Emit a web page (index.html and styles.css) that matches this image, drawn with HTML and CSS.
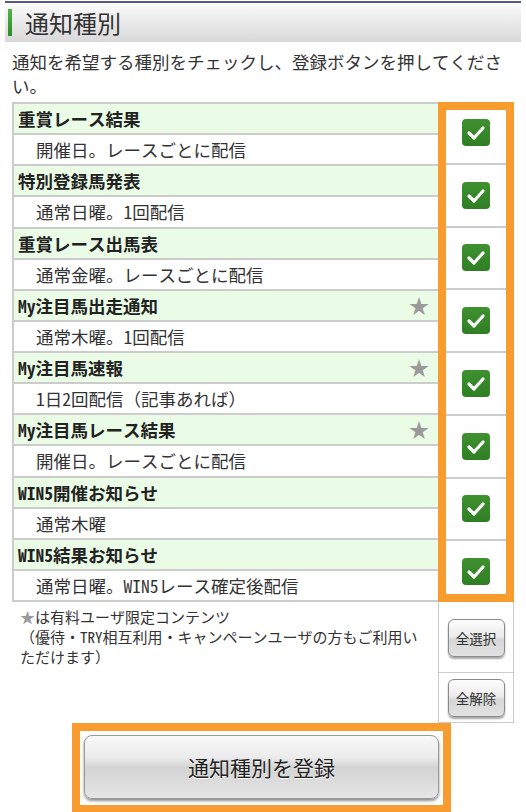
FILE: index.html
```html
<!DOCTYPE html>
<html lang="ja">
<head>
<meta charset="utf-8">
<title>通知種別</title>
<link rel="stylesheet" href="styles.css">
</head>
<body>
<div class="page">
  <div class="header"><span class="bar"></span><h1 class="title">通知種別</h1></div>
  <p class="intro">通知を希望する種別をチェックし、登録ボタンを押してください。</p>
  <div class="main">
    <div class="list">
      <div class="row head">重賞レース結果</div>
      <div class="row desc">開催日。レースごとに配信</div>
      <div class="row head">特別登録馬発表</div>
      <div class="row desc">通常日曜。1回配信</div>
      <div class="row head">重賞レース出馬表</div>
      <div class="row desc">通常金曜。レースごとに配信</div>
      <div class="row head"><span>My注目馬出走通知</span><span class="star">★</span></div>
      <div class="row desc">通常木曜。1回配信</div>
      <div class="row head"><span>My注目馬速報</span><span class="star">★</span></div>
      <div class="row desc">1日2回配信（記事あれば）</div>
      <div class="row head"><span>My注目馬レース結果</span><span class="star">★</span></div>
      <div class="row desc">開催日。レースごとに配信</div>
      <div class="row head">WIN5開催お知らせ</div>
      <div class="row desc">通常木曜</div>
      <div class="row head">WIN5結果お知らせ</div>
      <div class="row desc">通常日曜。WIN5レース確定後配信</div>
    </div>
    <div class="checks">
      <div class="cell"><span class="cb"><svg viewBox="0 0 28 27" width="28" height="27"><polyline points="7,14 12,19 21,9" /></svg></span></div>
      <div class="cell"><span class="cb"><svg viewBox="0 0 28 27" width="28" height="27"><polyline points="7,14 12,19 21,9" /></svg></span></div>
      <div class="cell"><span class="cb"><svg viewBox="0 0 28 27" width="28" height="27"><polyline points="7,14 12,19 21,9" /></svg></span></div>
      <div class="cell"><span class="cb"><svg viewBox="0 0 28 27" width="28" height="27"><polyline points="7,14 12,19 21,9" /></svg></span></div>
      <div class="cell"><span class="cb"><svg viewBox="0 0 28 27" width="28" height="27"><polyline points="7,14 12,19 21,9" /></svg></span></div>
      <div class="cell"><span class="cb"><svg viewBox="0 0 28 27" width="28" height="27"><polyline points="7,14 12,19 21,9" /></svg></span></div>
      <div class="cell"><span class="cb"><svg viewBox="0 0 28 27" width="28" height="27"><polyline points="7,14 12,19 21,9" /></svg></span></div>
      <div class="cell"><span class="cb"><svg viewBox="0 0 28 27" width="28" height="27"><polyline points="7,14 12,19 21,9" /></svg></span></div>
    </div>
    <div class="note"><span class="nstar">★</span>は有料ユーザ限定コンテンツ<br>（優待・TRY相互利用・キャンペーンユーザの方もご利用いただけます）</div>
    <div class="ctrl">
      <div class="ctrl-cell first"><button class="small">全選択</button></div>
      <div class="ctrl-cell"><button class="small">全解除</button></div>
    </div>
  </div>
  <div class="submit-wrap"><button class="submit">通知種別を登録</button></div>
</div>
</body>
</html>
```
FILE: styles.css
```css
html, body {
  margin: 0;
  padding: 0;
  background: #ffffff;
}
body {
  font-family: "Noto Sans Mono CJK JP", "Noto Sans CJK JP", sans-serif;
  color: #333333;
}
.page {
  width: 526px;
  padding-top: 1px;
}
.header {
  margin: 0 5px;
  height: 39px;
  border-top: 2px solid #58598a;
  background: linear-gradient(#fbfbfb, #d8d8d8);
  display: flex;
  align-items: center;
}
.bar {
  width: 4px;
  height: 27px;
  margin-left: 3px;
  background: linear-gradient(#4fb446, #2f8a2a);
}
.title {
  margin: 0 0 0 13px;
  font-size: 24px;
  font-weight: 500;
  line-height: 30px;
  color: #333333;
}
.intro {
  margin: 8px 0 4px;
  padding: 0 12px;
  font-size: 17.5px;
  line-height: 24px;
  color: #333333;
}
.main {
  display: grid;
  grid-template-columns: 426px 76px;
  margin-left: 12px;
}
.list {
  border-top: 2px solid #cccccc;
  border-left: 2px solid #cccccc;
}
.row {
  box-sizing: border-box;
  height: 31.125px;
  border-bottom: 2px solid #cccccc;
  font-size: 17.5px;
  line-height: 29px;
  white-space: nowrap;
}
.head {
  background: #eafce6;
  font-weight: 700;
  color: #222222;
  padding-left: 4px;
  display: flex;
  justify-content: space-between;
}
.desc {
  padding-left: 22px;
  color: #333333;
}
.star {
  color: #9a9a9a;
  font-weight: 400;
  font-size: 20px;
  padding-right: 9px;
}
.checks {
  display: flex;
  flex-direction: column;
  outline: 8px solid #f99c30;
  outline-offset: -8px;
  background: #ffffff;
}
.cell {
  flex: 1;
  display: flex;
  align-items: center;
  justify-content: center;
  border-bottom: 2px solid #cccccc;
  box-sizing: border-box;
}
.cell:last-child {
  border-bottom: none;
}
.cb {
  width: 28px;
  height: 27px;
  border-radius: 4px;
  background: linear-gradient(#3f9130, #2f7e24);
  display: block;
}
.cb svg {
  display: block;
}
.cb polyline {
  fill: none;
  stroke: #ffffff;
  stroke-width: 3.2;
  stroke-linecap: round;
  stroke-linejoin: round;
}
.note {
  padding: 5px 16px 0 8px;
  font-size: 15px;
  line-height: 20px;
  color: #333333;
}
.nstar {
  color: #9a9a9a;
}
.ctrl {
  border-left: 1px solid #cccccc;
  border-right: 1px solid #cccccc;
  border-bottom: 1px solid #cccccc;
  box-sizing: border-box;
}
.ctrl-cell {
  height: 49px;
  display: flex;
  align-items: center;
  justify-content: center;
}
.ctrl-cell.first {
  height: 71px;
  border-bottom: 1px solid #cccccc;
  box-sizing: border-box;
  padding-top: 1px;
}
.small {
  width: 57px;
  height: 38px;
  padding: 0;
  border: 1px solid #8a8a8a;
  border-radius: 6px;
  background: linear-gradient(#fdfdfd 0%, #ececec 45%, #d6d6d6 55%, #e2e2e2 100%);
  box-shadow: 0 2px 2px rgba(0, 0, 0, 0.35);
  font-family: "Noto Sans CJK JP", sans-serif;
  font-size: 13.5px;
  color: #333333;
}
.submit-wrap {
  box-sizing: border-box;
  width: 379px;
  height: 90px;
  margin-left: 72px;
  border: 8px solid #f99c30;
  padding: 4px;
  background: #ffffff;
}
.submit {
  display: block;
  width: 100%;
  height: 64px;
  padding: 0;
  border: 1px solid #9a9a9a;
  border-radius: 8px;
  background: linear-gradient(#f9f9f9 0%, #ebebeb 35%, #d4d4d4 50%, #dcdcdc 75%, #e6e6e6 100%);
  box-shadow: 0 2px 3px rgba(0, 0, 0, 0.45);
  font-family: "Noto Sans CJK JP", sans-serif;
  font-size: 21px;
  color: #222222;
  text-shadow: 0 1px 0 #ffffff;
}
```
